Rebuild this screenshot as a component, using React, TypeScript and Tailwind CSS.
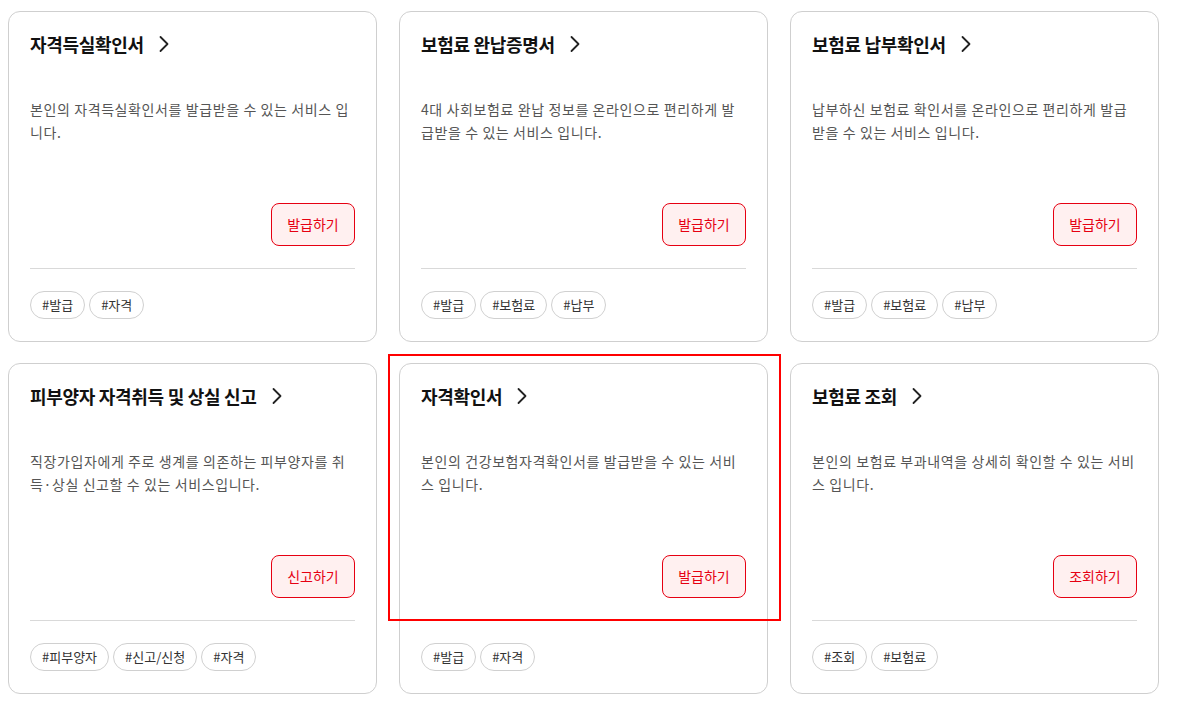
import React from 'react';

type Card = {
  title: string;
  desc: string;
  action: string;
  tags: string[];
};

const cards: Card[] = [
  { title: '자격득실확인서', desc: '본인의 자격득실확인서를 발급받을 수 있는 서비스 입니다.', action: '발급하기', tags: ['#발급', '#자격'] },
  { title: '보험료 완납증명서', desc: '4대 사회보험료 완납 정보를 온라인으로 편리하게 발급받을 수 있는 서비스 입니다.', action: '발급하기', tags: ['#발급', '#보험료', '#납부'] },
  { title: '보험료 납부확인서', desc: '납부하신 보험료 확인서를 온라인으로 편리하게 발급받을 수 있는 서비스 입니다.', action: '발급하기', tags: ['#발급', '#보험료', '#납부'] },
  { title: '피부양자 자격취득 및 상실 신고', desc: '직장가입자에게 주로 생계를 의존하는 피부양자를 취득·상실 신고할 수 있는 서비스입니다.', action: '신고하기', tags: ['#피부양자', '#신고/신청', '#자격'] },
  { title: '자격확인서', desc: '본인의 건강보험자격확인서를 발급받을 수 있는 서비스 입니다.', action: '발급하기', tags: ['#발급', '#자격'] },
  { title: '보험료 조회', desc: '본인의 보험료 부과내역을 상세히 확인할 수 있는 서비스 입니다.', action: '조회하기', tags: ['#조회', '#보험료'] },
];

const Chevron = () => (
  <svg width="12" height="18" viewBox="0 0 12 18" fill="none" className="ml-[14px]">
    <path d="M2.5 2 L9.5 9 L2.5 16" stroke="#222" strokeWidth="1.8" strokeLinecap="round" strokeLinejoin="round" />
  </svg>
);

const ServiceCard = ({ card }: { card: Card }) => (
  <div className="flex h-[331px] flex-col rounded-[12px] border border-[#cfcfcf] bg-white px-[21px] pt-[20px] pb-[22px]">
    <div className="flex h-[24px] items-center">
      <h3 className="text-[18px] font-bold leading-[24px] tracking-[-0.3px] text-[#111]">{card.title}</h3>
      <Chevron />
    </div>
    <p className="mt-[42px] break-all pr-[2px] text-[14px] leading-[23px] tracking-[0.6px] text-[#555]">{card.desc}</p>
    <div className="mt-auto flex justify-end">
      <button className="h-[43px] w-[84px] rounded-[8px] border border-[#e60012] bg-[#fff0f0] text-[14px] text-[#e60012]">
        {card.action}
      </button>
    </div>
    <div className="mt-[22px] h-px bg-[#d9d9d9]" />
    <div className="mt-[22px] flex gap-[4px]">
      {card.tags.map((t) => (
        <span key={t} className="flex h-[28px] items-center rounded-full border border-[#d0d0d0] px-[11px] text-[13px] text-[#333]">
          {t}
        </span>
      ))}
    </div>
  </div>
);

export default function App() {
  return (
    <div
      className="relative min-h-[708px] bg-white pl-[8px] pt-[11px]"
      style={{ fontFamily: '"Noto Sans CJK KR", "Noto Sans", sans-serif' }}
    >
      <div className="grid grid-cols-[369px_369px_369px] gap-x-[22px] gap-y-[21px]">
        {cards.map((c) => (
          <ServiceCard key={c.title} card={c} />
        ))}
      </div>
      <div className="pointer-events-none absolute left-[388px] top-[354px] h-[267px] w-[393px] border-2 border-[#f00]" />
    </div>
  );
}
